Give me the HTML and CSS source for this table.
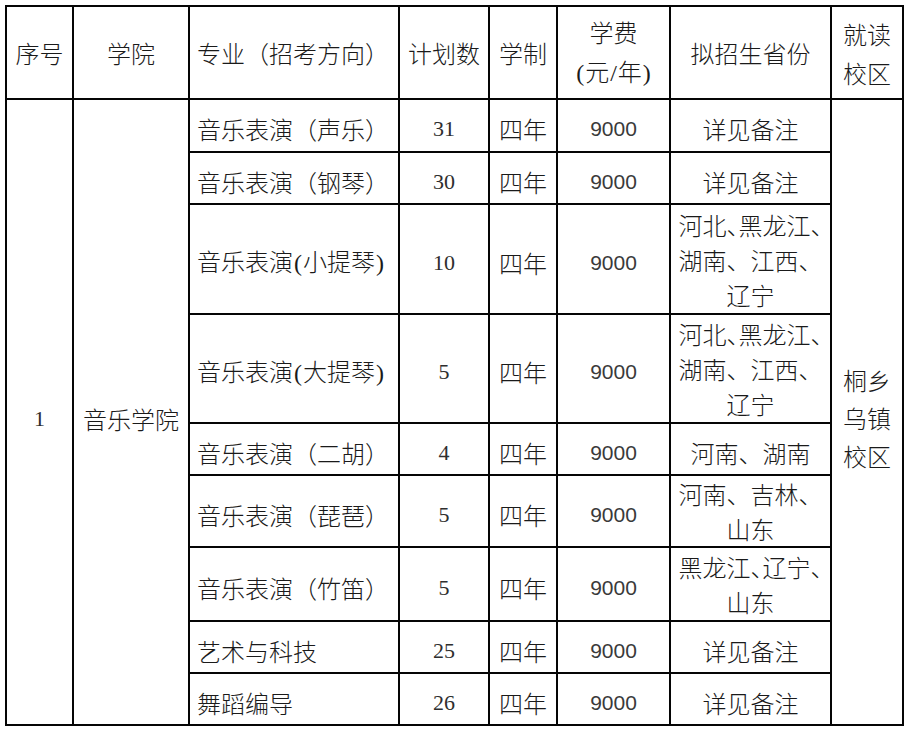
FILE: index.html
```html
<!DOCTYPE html>
<html lang="zh-CN">
<head>
<meta charset="utf-8">
<title>招生计划</title>
<link rel="stylesheet" href="styles.css">
</head>
<body>
<div class="plan" role="table">
  <div class="c hd"><span class="t">序号</span></div>
  <div class="c hd"><span class="t">学院</span></div>
  <div class="c hd major"><span class="t">专业（招考方向）</span></div>
  <div class="c hd"><span class="t">计划数</span></div>
  <div class="c hd"><span class="t">学制</span></div>
  <div class="c hd two"><span class="t">学费<br><span class="lat">(</span>元<span class="lat">/</span>年<span class="lat">)</span></span></div>
  <div class="c hd"><span class="t">拟招生省份</span></div>
  <div class="c hd two"><span class="t">就读<br>校区</span></div>

  <div class="c span num"><span class="t">1</span></div>
  <div class="c span"><span class="t">音乐学院</span></div>
  <div class="c major"><span class="t">音乐表演（声乐）</span></div>
  <div class="c num"><span class="t">31</span></div>
  <div class="c"><span class="t">四年</span></div>
  <div class="c fee"><span class="t">9000</span></div>
  <div class="c"><span class="t">详见备注</span></div>
  <div class="c span campus"><span class="t">桐乡<br>乌镇<br>校区</span></div>

  <div class="c major"><span class="t">音乐表演（钢琴）</span></div>
  <div class="c num"><span class="t">30</span></div>
  <div class="c"><span class="t">四年</span></div>
  <div class="c fee"><span class="t">9000</span></div>
  <div class="c"><span class="t">详见备注</span></div>

  <div class="c major"><span class="t">音乐表演<span class="lat">(</span>小提琴<span class="lat">)</span></span></div>
  <div class="c num"><span class="t">10</span></div>
  <div class="c"><span class="t">四年</span></div>
  <div class="c fee"><span class="t">9000</span></div>
  <div class="c prov"><span class="t">河北<span class="h">、</span>黑龙江<span class="h">、</span><br>湖南、江西、<br>辽宁</span></div>

  <div class="c major"><span class="t">音乐表演<span class="lat">(</span>大提琴<span class="lat">)</span></span></div>
  <div class="c num"><span class="t">5</span></div>
  <div class="c"><span class="t">四年</span></div>
  <div class="c fee"><span class="t">9000</span></div>
  <div class="c prov"><span class="t">河北<span class="h">、</span>黑龙江<span class="h">、</span><br>湖南、江西、<br>辽宁</span></div>

  <div class="c major"><span class="t">音乐表演（二胡）</span></div>
  <div class="c num"><span class="t">4</span></div>
  <div class="c"><span class="t">四年</span></div>
  <div class="c fee"><span class="t">9000</span></div>
  <div class="c"><span class="t">河南、湖南</span></div>

  <div class="c major"><span class="t">音乐表演（琵琶）</span></div>
  <div class="c num"><span class="t">5</span></div>
  <div class="c"><span class="t">四年</span></div>
  <div class="c fee"><span class="t">9000</span></div>
  <div class="c prov"><span class="t">河南、吉林、<br>山东</span></div>

  <div class="c major"><span class="t">音乐表演（竹笛）</span></div>
  <div class="c num"><span class="t">5</span></div>
  <div class="c"><span class="t">四年</span></div>
  <div class="c fee"><span class="t">9000</span></div>
  <div class="c prov"><span class="t">黑龙江<span class="h">、</span>辽宁<span class="h">、</span><br>山东</span></div>

  <div class="c major"><span class="t">艺术与科技</span></div>
  <div class="c num"><span class="t">25</span></div>
  <div class="c"><span class="t">四年</span></div>
  <div class="c fee"><span class="t">9000</span></div>
  <div class="c"><span class="t">详见备注</span></div>

  <div class="c major"><span class="t">舞蹈编导</span></div>
  <div class="c num"><span class="t">26</span></div>
  <div class="c"><span class="t">四年</span></div>
  <div class="c fee"><span class="t">9000</span></div>
  <div class="c"><span class="t">详见备注</span></div>
</div>
</body>
</html>
```
FILE: styles.css
```css
html, body {
  margin: 0;
  padding: 0;
  background: #ffffff;
}

body {
  font-family: "Noto Sans CJK SC", sans-serif;
  font-size: 24px;
  font-weight: 300;
  color: #1a1a1a;
}

.plan {
  display: grid;
  grid-template-columns: 65px 114px 208px 88px 66px 111px 159px 70px;
  grid-template-rows: 91px 51px 50px 108px 107px 50px 70px 72px 50px 50px;
  gap: 2px;
  padding: 2px;
  background: #050505;
  width: max-content;
  margin: 5px 0 0 5px;
}

.c {
  background: #ffffff;
  display: flex;
  justify-content: center;
  align-items: center;
  text-align: center;
  line-height: 35px;
  padding-top: 6px;
  white-space: nowrap;
  box-sizing: border-box;
}

.t {
  display: block;
}

.hd {
  padding-top: 0;
}

.hd.two {
  line-height: 39px;
}

.prov {
  padding-top: 0;
}

.major {
  justify-content: flex-start;
  text-align: left;
  padding-left: 7px;
}

.span {
  grid-row: span 9;
  padding-top: 12px;
}

.campus {
  line-height: 38px;
}

.num {
  font-family: "Liberation Serif", serif;
  font-size: 22px;
  font-weight: 400;
  color: #2e2e2e;
}

.fee {
  font-family: "Liberation Sans", sans-serif;
  font-size: 21px;
  font-weight: 400;
  color: #3a3a3a;
}

.lat {
  font-family: "Liberation Serif", serif;
  font-weight: 400;
  padding: 0 1px;
}

.h {
  font-feature-settings: "halt";
}
```
